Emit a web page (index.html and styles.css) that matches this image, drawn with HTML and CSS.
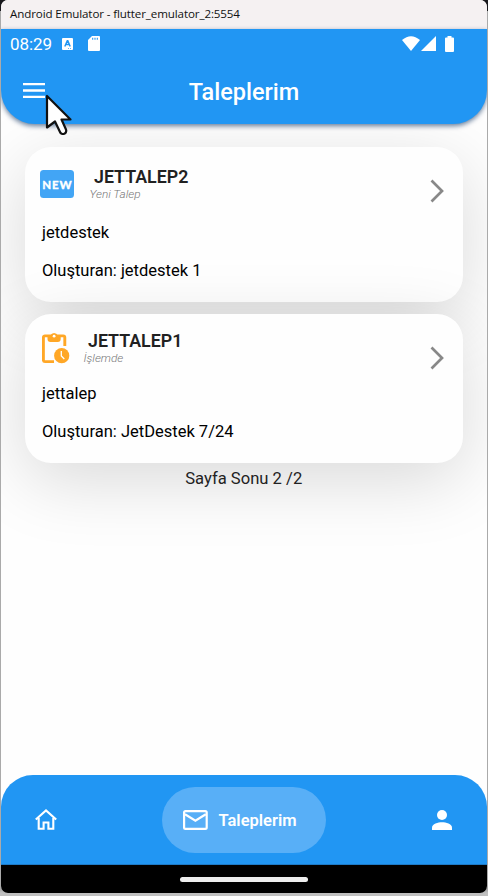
FILE: index.html
```
<!DOCTYPE html>
<html lang="tr">
<head>
<meta charset="utf-8">
<title>Taleplerim</title>
<link rel="stylesheet" href="styles.css">
</head>
<body>
<div class="window">
  <div class="titlebar">Android Emulator - flutter_emulator_2:5554</div>
  <div class="screen">
    <header class="header">
      <div class="status">
        <span class="clock">08:29</span>
        <svg class="keyboard" width="11" height="12" viewBox="0 0 11 12"><rect width="11" height="12" rx="1" fill="#fff"/><path d="M2.8 8.5 5.3 2.8h.5L8.2 8.5M3.8 6.6h3.5" fill="none" stroke="#2196f3" stroke-width="1.5"/><path d="M6 10.5h1M8 10.5h1" stroke="#2196f3" stroke-width=".7"/></svg>
        <svg class="sdcard" width="12" height="15" viewBox="0 0 12 15"><path d="M4 0h7a1 1 0 0 1 1 1v13a1 1 0 0 1-1 1H1a1 1 0 0 1-1-1V4z" fill="#fff"/><path d="M4.7 1.8v2M7 1.8v2M9.3 1.8v2" stroke="#2196f3" stroke-width="1.1"/></svg>
        <svg class="wifi" width="18" height="15" viewBox="0 0 18 15"><path d="M0 4Q9-3.700 18 4L9 15z" fill="#fff"/></svg>
        <svg class="signal" width="15" height="15" viewBox="0 0 15 15"><path d="M15 0v15H0z" fill="#fff"/></svg>
        <svg class="battery" width="9" height="16" viewBox="0 0 9 16"><path d="M2.500 0h4v1.500H8a1 1 0 0 1 1 1V15a1 1 0 0 1-1 1H1a1 1 0 0 1-1-1V2.500a1 1 0 0 1 1-1h1.500z" fill="#fff"/></svg>
      </div>
      <div class="appbar">
        <svg class="menu" width="22" height="15" viewBox="0 0 22 15"><path d="M0 1.200h22M0 7.500h22M0 13.800h22" stroke="#fff" stroke-width="2.300"/></svg>
        <h1>Taleplerim</h1>
      </div>
    </header>
    <main class="list">
      <article class="card card-new">
        <div class="card-head">
          <svg class="badge" width="34" height="28" viewBox="0 0 34 28"><rect width="34" height="28" rx="3.500" fill="#42a5f5"/><text x="2.200" y="18.600" textLength="29.500" lengthAdjust="spacing" class="badge-text">NEW</text></svg>
          <div class="names"><h2>JETTALEP2</h2><p class="state">Yeni Talep</p></div>
          <svg class="chevron" width="15" height="24" viewBox="0 0 15 24"><path d="M1.500 1.500 12 12 1.500 22.500" fill="none" stroke="#888" stroke-width="2.700"/></svg>
        </div>
        <p class="line">jetdestek</p>
        <p class="line">Oluşturan: jetdestek 1</p>
      </article>
      <article class="card card-open">
        <div class="card-head">
          <svg class="clip" width="28" height="32" viewBox="0 0 28 32"><path d="M12 29.600H3a1.600 1.600 0 0 1-1.600-1.600V5.500A1.600 1.600 0 0 1 3 3.900h18.200a1.600 1.600 0 0 1 1.600 1.600V14" fill="none" stroke="#ffa726" stroke-width="2.900"/><path d="M5.500 3.500h3a3.800 3.800 0 0 1 7.200 0h3V7a3 3 0 0 1-3 3H8.500a3 3 0 0 1-3-3z" fill="#ffa726"/><circle cx="12.100" cy="4.200" r="1.400" fill="#fff"/><circle cx="19.700" cy="23.700" r="7.600" fill="#ffa726"/><path d="M19.300 19v5l3 3" fill="none" stroke="#fff" stroke-width="1.300"/></svg>
          <div class="names"><h2>JETTALEP1</h2><p class="state">İşlemde</p></div>
          <svg class="chevron" width="15" height="24" viewBox="0 0 15 24"><path d="M1.500 1.500 12 12 1.500 22.500" fill="none" stroke="#888" stroke-width="2.700"/></svg>
        </div>
        <p class="line">jettalep</p>
        <p class="line">Oluşturan: JetDestek 7/24</p>
      </article>
      <p class="end">Sayfa Sonu 2 /2</p>
    </main>
    <nav class="nav">
      <svg class="home" width="24" height="21" viewBox="0 0 24 21"><path d="M1.800 10.500 12 1.500l10.200 9M4.700 9v10.700h4.900v-6.200h4.800v6.200h4.900V9" fill="none" stroke="#fff" stroke-width="2.100"/></svg>
      <div class="tab">
        <svg width="25" height="20" viewBox="0 0 25 20"><rect x="1.100" y="1.100" width="22.600" height="17.800" rx="1.400" fill="none" stroke="#fff" stroke-width="2.200"/><path d="M2 4.200l10.400 6.500L22.800 4.200" fill="none" stroke="#fff" stroke-width="2.200"/></svg>
        <span>Taleplerim</span>
      </div>
      <svg class="person" width="20" height="20" viewBox="0 0 20 20"><circle cx="10" cy="5" r="5" fill="#fff"/><path d="M0 20v-2.500C0 14.200 6 12.300 10 12.300s10 1.900 10 5.200V20z" fill="#fff"/></svg>
    </nav>
    <div class="gesture"><span></span></div>
  </div>
</div>
<svg class="cursor" width="28" height="42" viewBox="0 0 28 42"><path d="M2 2v31.500l8-6 5 10.500a3.200 3.200 0 0 0 6-2.500l-4.500-10h9z" fill="#fff" stroke="#111" stroke-width="2.200" stroke-linejoin="round"/></svg>
</body>
</html>
```
FILE: styles.css
```
* { box-sizing: border-box; margin: 0; padding: 0; }
body { width: 488px; height: 896px; overflow: hidden; background: linear-gradient(#18181c 11px, #aaa 11px, #aaa 890px, #c0c0c0 893px); font-family: Roboto, sans-serif; }
svg { display: block; flex: none; }
.window { width: 486px; height: 893px; margin-left: 1px; border-radius: 7px; overflow: hidden; background: #fefefe; display: flex; flex-direction: column; }
.titlebar { height: 29px; padding-left: 9px; background: #f5f1f2; color: #111; font: 11.6px/28px "Open Sans", sans-serif; letter-spacing: -.12px; white-space: nowrap; }
.screen { flex: 1; display: flex; flex-direction: column; min-height: 0; }
.header { height: 94.5px; background: #2196f3; border-radius: 0 0 34px 34px; box-shadow: 0 2px 5px rgba(0, 40, 90, .6); z-index: 1; color: #fff; flex: none; }
.status { display: flex; align-items: center; height: 29px; padding: 0 33px 0 9px; }
.clock { font-size: 17px; width: 52px; line-height: 29px; letter-spacing: -.1px; padding-top: 1px; }
.sdcard { margin-left: 15px; }
.wifi { margin-left: auto; }
.signal { margin-left: 1px; }
.battery { margin-left: 9px; }
.appbar { position: relative; height: 65px; display: flex; align-items: center; justify-content: center; }
.menu { position: absolute; left: 22px; top: 25px; }
.appbar h1 { font-size: 23.500px; font-weight: 500; line-height: 30px; padding-top: 2px; }
.list { flex: 1; padding: 23.500px 24px 0 23.500px; display: flex; flex-direction: column; min-height: 0; }
.card { border-radius: 26px; background: #fefefe; box-shadow: 0 17px 70px rgba(0, 0, 0, .15); flex: none; }
.card-new { height: 155px; margin-bottom: 12px; padding-top: 19px; }
.card-open { height: 149px; padding-top: 17px; }
.card-head { display: flex; height: 48px; padding: 0 18px 0 15.500px; }
.card-open .card-head { height: 44px; }
.badge { margin-top: 4px; }
.badge-text { font: 900 11.500px Lato, sans-serif; fill: #fff; stroke: #fff; stroke-width: .3px; }
.clip { margin: 1px 0 0 1.500px; }
.names { margin-left: 15.500px; flex: 1; }
.card-open .names { margin-left: 14px; }
.names h2 { font-size: 17.800px; line-height: 22px; font-weight: 600; color: #212121; padding-left: 4.500px; }
.card-open .names h2 { margin-top: -1px; }
.state { font-size: 11.800px; line-height: 14px; font-style: italic; font-weight: 300; color: #777; margin-top: -1px; }
.chevron { margin-top: 13px; }
.card-open .chevron { margin-top: 15px; }
.line { font-size: 16.500px; line-height: 38px; color: #000; padding-left: 17.500px; white-space: nowrap; }
.end { font-size: 16.600px; line-height: 32px; text-align: center; color: #222; }
.nav { height: 90px; background: #2196f3; border-bottom: 1px solid #1e7ac6; border-radius: 32px 32px 0 0; display: flex; align-items: center; justify-content: space-between; padding: 0 35px 0 33px; flex: none; }
.tab { height: 66px; width: 164px; margin-right: 3px; border-radius: 33px; background: #58aff7; display: flex; align-items: center; gap: 11px; padding-left: 21px; color: #fff; font-size: 16.500px; font-weight: 600; }
.tab span { padding-top: 1px; }
.gesture { height: 28px; background: #000; display: flex; justify-content: center; align-items: center; flex: none; }
.gesture span { width: 128px; height: 5px; border-radius: 3px; background: #eee; }
.cursor { position: absolute; left: 45px; top: 94px; z-index: 5; }
```
